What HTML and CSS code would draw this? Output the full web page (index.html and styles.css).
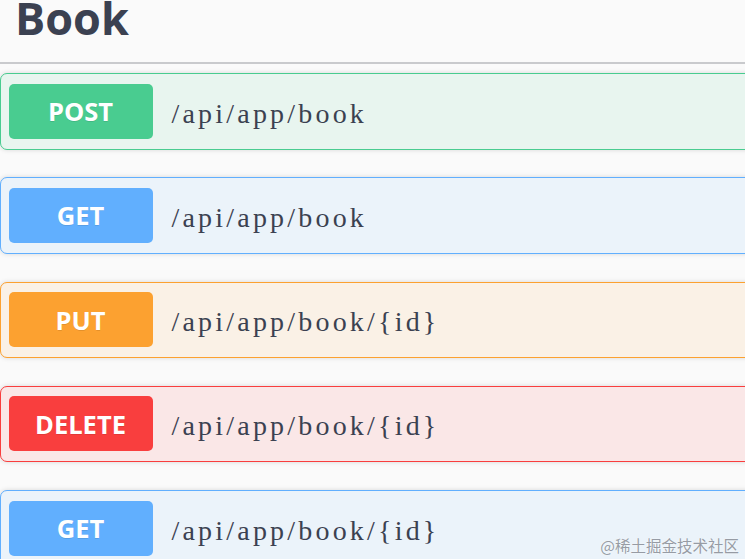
FILE: index.html
```html
<!DOCTYPE html>
<html lang="en">
<head>
<meta charset="utf-8">
<title>Book</title>
<link rel="stylesheet" href="styles.css">
</head>
<body>
<div class="page">
  <h4 class="tag">Book</h4>
  <div class="ops">
    <div class="op op-post">
      <span class="method">POST</span>
      <span class="path">/api/app/book</span>
    </div>
    <div class="op op-get">
      <span class="method">GET</span>
      <span class="path">/api/app/book</span>
    </div>
    <div class="op op-put">
      <span class="method">PUT</span>
      <span class="path">/api/app/book/{id}</span>
    </div>
    <div class="op op-delete">
      <span class="method">DELETE</span>
      <span class="path">/api/app/book/{id}</span>
    </div>
    <div class="op op-get">
      <span class="method">GET</span>
      <span class="path">/api/app/book/{id}</span>
    </div>
  </div>
  <div class="watermark">@稀土掘金技术社区</div>
</div>
</body>
</html>
```

FILE: styles.css
```css
html, body {
  margin: 0;
  padding: 0;
  background: #fafafa;
  overflow: hidden;
}

.page {
  position: relative;
  width: 745px;
  height: 559px;
  overflow: hidden;
}

.tag {
  margin: -4px 0 0 0;
  padding: 0 0 22px 15px;
  font-family: "Open Sans", "Noto Sans", sans-serif;
  font-weight: 700;
  font-size: 45px;
  line-height: 44px;
  color: #3b4151;
  border-bottom: 2px solid #c9cacd;
}

.ops {
  display: flex;
  flex-direction: column;
  gap: 27.75px;
  padding-top: 9px;
  margin-right: -30px;
}

.op {
  display: flex;
  align-items: center;
  padding: 9.5px 8px 10px 7.5px;
  border: 1.5px solid;
  border-radius: 7px;
  box-shadow: 0 0 5px rgba(0, 0, 0, 0.14);
}

.method {
  flex: none;
  width: 144px;
  height: 55px;
  display: flex;
  align-items: center;
  justify-content: center;
  border-radius: 5px;
  font-family: "Open Sans", "Noto Sans", sans-serif;
  font-weight: 700;
  font-size: 25.5px;
  color: #fff;
  text-shadow: 0 1px 0 rgba(0, 0, 0, 0.1);
}

.path {
  padding: 5px 18px 0 19px;
  font-family: "Liberation Serif", serif;
  font-size: 28px;
  letter-spacing: 3.2px;
  color: #3b4151;
}

.op-post { background: #e8f5ef; border-color: #49cc90; }
.op-post .method { background: #49cc90; }

.op-get { background: #ebf3fa; border-color: #61affe; }
.op-get .method { background: #61affe; }

.op-put { background: #faf1e6; border-color: #fca130; }
.op-put .method { background: #fca130; }

.op-delete { background: #fae7e7; border-color: #f93e3e; }
.op-delete .method { background: #f93e3e; }

.watermark {
  position: absolute;
  right: 6px;
  bottom: 5px;
  font-family: "Noto Sans CJK SC", sans-serif;
  font-size: 15.5px;
  line-height: 18px;
  color: rgba(120, 125, 135, 0.75);
  text-shadow: 0 0 2px rgba(255, 255, 255, 0.8);
}
```
